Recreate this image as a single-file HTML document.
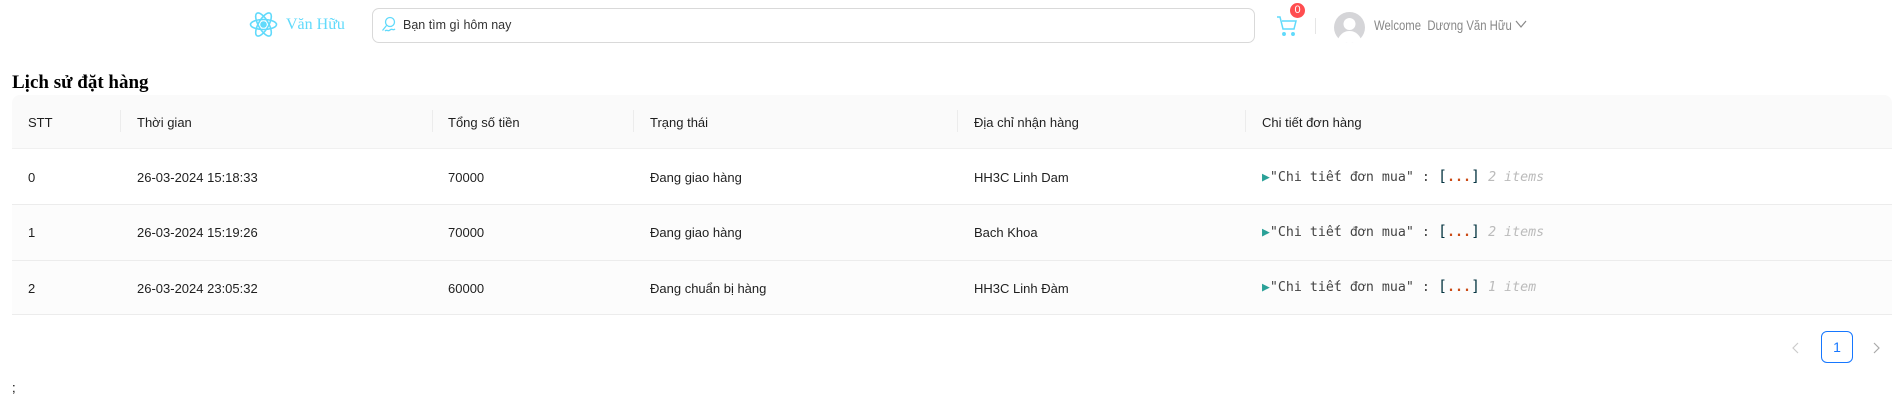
<!DOCTYPE html>
<html><head><meta charset="utf-8"><style>
*{margin:0;padding:0;box-sizing:border-box}
body{width:1902px;height:406px;background:#fff;font-family:"Liberation Sans","DejaVu Sans",sans-serif;font-size:13px;color:rgba(0,0,0,.88);position:relative;overflow:hidden}
.a{position:absolute}
.th,.td{position:absolute;white-space:nowrap}
.mono{font-family:"DejaVu Sans Mono","Liberation Mono",monospace;font-size:13.3px}
</style></head><body>
<svg class="a" style="left:249px;top:10px" width="29" height="29" viewBox="0 0 29 29" fill="none" stroke="#61dafb" stroke-width="1.6">
<ellipse cx="14.5" cy="14.5" rx="13" ry="5"/>
<ellipse cx="14.5" cy="14.5" rx="13" ry="5" transform="rotate(60 14.5 14.5)"/>
<ellipse cx="14.5" cy="14.5" rx="13" ry="5" transform="rotate(120 14.5 14.5)"/>
<circle cx="14.5" cy="14.5" r="2.5" fill="#61dafb"/></svg>
<div class="a" style="left:286px;top:16px;font-family:'Liberation Serif',serif;font-size:16px;color:#61dafb">Văn Hữu</div>
<div class="a" style="left:372px;top:8px;width:883px;height:35px;border:1px solid #d9d9d9;border-radius:7px"></div>
<svg class="a" style="left:381px;top:16px" width="16" height="17" viewBox="0 0 16 17" fill="none" stroke="#61dafb" stroke-width="1.3"><circle cx="9" cy="6" r="4.5"/><path d="M5.5 9.5 1.5 14.5"/><path d="M4 15c2-2 3 1 5-1s3 1 5-1"/></svg>
<div class="a" style="left:403px;top:18px;font-size:12.5px;color:#333">Bạn tìm gì hôm nay</div>
<svg class="a" style="left:1276px;top:15px" width="22" height="22" viewBox="0 0 22 22" fill="none" stroke="#61dafb" stroke-width="1.5"><path d="M1 2h3l3 12h11l2-8H6"/><circle cx="8" cy="19" r="1.2" fill="#61dafb"/><circle cx="17" cy="19" r="1.2" fill="#61dafb"/></svg>
<div class="a" style="left:1290px;top:3px;width:15px;height:15px;border-radius:50%;background:#ff4d4f;color:#fff;font-size:11px;line-height:15px;text-align:center">0</div>
<div class="a" style="left:1315px;top:18px;width:1px;height:16px;background:#e5e5e5"></div>
<svg class="a" style="left:1334px;top:12px" width="31" height="31" viewBox="0 0 31 31"><circle cx="15.5" cy="15.5" r="15.5" fill="#d5d5d8"/><circle cx="15.5" cy="12" r="6" fill="#fff"/><path d="M4 27c3-6 7-8 11.5-8S24 21 27 27c-3 3-7 4-11.5 4S7 30 4 27z" fill="#fff"/></svg>
<div class="a" style="left:1374px;top:18px;font-size:13.5px;color:#888;transform:scaleX(0.84);transform-origin:0 0;white-space:nowrap">Welcome&nbsp; Dương Văn Hữu</div>
<svg class="a" style="left:1515px;top:20px" width="12" height="9" viewBox="0 0 12 9" fill="none" stroke="#888" stroke-width="1.2"><path d="M1 1l5 6 5-6"/></svg>
<div class="a" style="left:12px;top:72px;font-family:'Liberation Serif',serif;font-weight:bold;font-size:19px;color:#000">Lịch sử đặt hàng</div>
<div class="a" style="left:12px;top:95px;width:1880px;height:54px;background:#fafafa;border-radius:8px 8px 0 0;border-bottom:1px solid #f0f0f0"></div>
<div class="a" style="left:12px;top:204px;width:1880px;height:56px;background:#fcfcfc"></div>
<div class="a" style="left:12px;top:260px;width:1880px;height:54px;background:#fcfcfc"></div>
<div class="a" style="left:12px;top:204px;width:1880px;height:1px;background:#ececec"></div>
<div class="a" style="left:12px;top:260px;width:1880px;height:1px;background:#ececec"></div>
<div class="a" style="left:12px;top:314px;width:1880px;height:1px;background:#ececec"></div>
<div class="a" style="left:120px;top:110px;width:1px;height:22px;background:#ececec"></div>
<div class="a" style="left:432px;top:110px;width:1px;height:22px;background:#ececec"></div>
<div class="a" style="left:633px;top:110px;width:1px;height:22px;background:#ececec"></div>
<div class="a" style="left:957px;top:110px;width:1px;height:22px;background:#ececec"></div>
<div class="a" style="left:1245px;top:110px;width:1px;height:22px;background:#ececec"></div>
<div class="th" style="left:28px;top:115px">STT</div>
<div class="th" style="left:137px;top:115px">Thời gian</div>
<div class="th" style="left:448px;top:115px">Tổng số tiền</div>
<div class="th" style="left:650px;top:115px">Trạng thái</div>
<div class="th" style="left:974px;top:115px">Địa chỉ nhận hàng</div>
<div class="th" style="left:1262px;top:115px">Chi tiết đơn hàng</div>

<div class="td" style="left:28px;top:170px">0</div>
<div class="td" style="left:137px;top:170px">26-03-2024 15:18:33</div>
<div class="td" style="left:448px;top:170px">70000</div>
<div class="td" style="left:650px;top:170px">Đang giao hàng</div>
<div class="td" style="left:974px;top:170px">HH3C Linh Dam</div>

<div class="td" style="left:28px;top:225px">1</div>
<div class="td" style="left:137px;top:225px">26-03-2024 15:19:26</div>
<div class="td" style="left:448px;top:225px">70000</div>
<div class="td" style="left:650px;top:225px">Đang giao hàng</div>
<div class="td" style="left:974px;top:225px">Bach Khoa</div>

<div class="td" style="left:28px;top:281px">2</div>
<div class="td" style="left:137px;top:281px">26-03-2024 23:05:32</div>
<div class="td" style="left:448px;top:281px">60000</div>
<div class="td" style="left:650px;top:281px">Đang chuẩn bị hàng</div>
<div class="td" style="left:974px;top:281px">HH3C Linh Đàm</div>

<div class="td mono" style="left:1262px;top:167px;color:#444"><span style="color:#2aa198;font-size:13px">▶</span>"Chi tiết đơn mua" : <b style="color:#073642;font-weight:normal;font-size:15px">[</b><span style="color:#cb4b16;font-weight:bold">...</span><b style="color:#073642;font-weight:normal;font-size:15px">]</b> <i style="color:#bbb">2 items</i></div>
<div class="td mono" style="left:1262px;top:222px;color:#444"><span style="color:#2aa198;font-size:13px">▶</span>"Chi tiết đơn mua" : <b style="color:#073642;font-weight:normal;font-size:15px">[</b><span style="color:#cb4b16;font-weight:bold">...</span><b style="color:#073642;font-weight:normal;font-size:15px">]</b> <i style="color:#bbb">2 items</i></div>
<div class="td mono" style="left:1262px;top:277px;color:#444"><span style="color:#2aa198;font-size:13px">▶</span>"Chi tiết đơn mua" : <b style="color:#073642;font-weight:normal;font-size:15px">[</b><span style="color:#cb4b16;font-weight:bold">...</span><b style="color:#073642;font-weight:normal;font-size:15px">]</b> <i style="color:#bbb">1 item</i></div>

<svg class="a" style="left:1791px;top:341px" width="10" height="14" viewBox="0 0 10 14" fill="none" stroke="#ccc" stroke-width="1.2"><path d="M7 2 2 7l5 5"/></svg>
<div class="a" style="left:1821px;top:331px;width:32px;height:32px;border:1px solid #1677ff;border-radius:6px;color:#1677ff;text-align:center;line-height:30px;font-size:14px">1</div>
<svg class="a" style="left:1871px;top:341px" width="10" height="14" viewBox="0 0 10 14" fill="none" stroke="#aaa" stroke-width="1.2"><path d="M3 2l5 5-5 5"/></svg>
<div class="a" style="left:12px;top:380px;font-size:13px;color:#000">;</div>
</body></html>
